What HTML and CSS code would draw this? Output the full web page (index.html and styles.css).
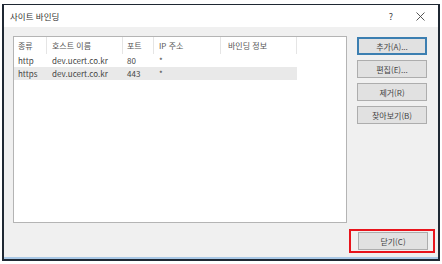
FILE: index.html
```html
<!DOCTYPE html>
<html lang="ko">
<head>
    <meta charset="UTF-8">
    <meta name="viewport" content="width=device-width, initial-scale=1.0">
    <title>사이트 바인딩</title>
    <link rel="stylesheet" href="styles.css">
</head>
<body>
    <div class="window">
        <div class="titlebar">
            <span class="title">사이트 바인딩</span>
            <span class="help">?</span>
            <svg class="close-x" width="9" height="9" viewBox="0 0 9 9">
                <path d="M0.5 0.5L8.5 8.5M8.5 0.5L0.5 8.5" stroke="#444" stroke-width="0.9" fill="none"/>
            </svg>
        </div>
        <div class="content">
            <div class="main">
                <div class="list">
                    <div class="row header">
                        <span class="col c1">종류</span>
                        <span class="col c2">호스트 이름</span>
                        <span class="col c3">포트</span>
                        <span class="col c4">IP 주소</span>
                        <span class="col c5">바인딩 정보</span>
                    </div>
                    <div class="row">
                        <span class="col c1">http</span>
                        <span class="col c2">dev.ucert.co.kr</span>
                        <span class="col c3">80</span>
                        <span class="col c4">*</span>
                        <span class="col c5"></span>
                    </div>
                    <div class="row selected">
                        <span class="col c1">https</span>
                        <span class="col c2">dev.ucert.co.kr</span>
                        <span class="col c3">443</span>
                        <span class="col c4">*</span>
                        <span class="col c5"></span>
                    </div>
                </div>
                <div class="buttons">
                    <button class="btn default">추가(A)...</button>
                    <button class="btn">편집(E)...</button>
                    <button class="btn">제거(R)</button>
                    <button class="btn">찾아보기(B)</button>
                </div>
            </div>
            <div class="footer">
                <div class="highlight">
                    <button class="btn">닫기(C)</button>
                </div>
            </div>
        </div>
    </div>
</body>
</html>
```

FILE: styles.css
```css
body {
    margin: 0;
    background-color: #fff;
    font-family: "Noto Sans CJK KR", "Liberation Sans", sans-serif;
    font-size: 8px;
    color: #444;
}
.window {
    margin: 4px 0 0 2px;
    width: 434px;
    height: 254px;
    border: 2px solid #1f2833;
    border-top-width: 1px;
    display: flex;
    flex-direction: column;
    background-color: #f0f0f0;
    box-shadow: inset 0 -2px 0 #a9c8e6;
}
.titlebar {
    height: 22px;
    background-color: #fff;
    display: flex;
    align-items: center;
    padding: 0 0 0 6px;
}
.title {
    flex: 1;
    font-size: 8.5px;
    color: #333;
}
.help {
    font-size: 9px;
    margin-right: 23px;
}
.close-x {
    margin-right: 13px;
}
.content {
    flex: 1;
    display: flex;
    flex-direction: column;
    padding: 9px 10px 6px 9px;
}
.main {
    display: flex;
}
.list {
    width: 332px;
    height: 185px;
    background-color: #fff;
    border: 1px solid #b4b4b4;
}
.row {
    display: flex;
    height: 13px;
    align-items: center;
    width: 283px;
}
.row.header {
    height: 17px;
}
.row.header .col {
    border-right: 1px solid #e5e5e5;
    height: 17px;
    line-height: 17px;
    color: #555;
}
.row.selected {
    background-color: #e9e9e9;
}
.col {
    box-sizing: border-box;
    padding-left: 4px;
    white-space: nowrap;
}
.c1 { width: 33px; }
.c2 { width: 76px; padding-left: 5px; }
.c3 { width: 31px; }
.c4 { width: 67px; padding-left: 5px; }
.c5 { width: 76px; padding-left: 7px; }
.buttons {
    display: flex;
    flex-direction: column;
    gap: 5px;
    margin: 1px 0 0 10px;
}
.btn {
    width: 70px;
    height: 18px;
    padding: 0;
    font-family: inherit;
    font-size: 8px;
    color: #444;
    background-color: #e1e1e1;
    border: 1px solid #adadad;
}
.btn.default {
    border: 2px solid #3c7fb1;
}
.footer {
    margin-top: auto;
    display: flex;
    justify-content: flex-end;
    margin-right: -7px;
}
.highlight {
    border: 2px solid #e8141c;
    padding: 1px 5px 1px 7px;
}
```
